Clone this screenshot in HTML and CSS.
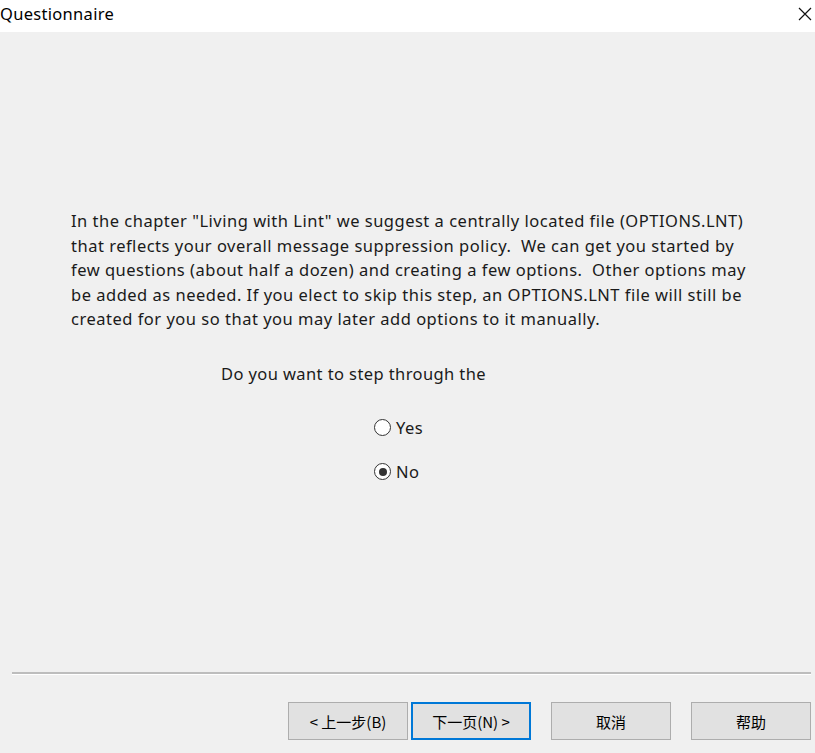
FILE: index.html
```html
<!DOCTYPE html>
<html>
<head>
<meta charset="utf-8">
<link rel="stylesheet" href="styles.css">
</head>
<body>
<div class="window">
  <div class="titlebar">
    <span class="title">Questionnaire</span>
    <svg class="close" width="16" height="16" viewBox="0 0 16 16"><path d="M2 2 L14 14 M14 2 L2 14" stroke="#111" stroke-width="1.2" fill="none"/></svg>
  </div>
  <div class="content">
    <p class="intro">In the chapter "Living with Lint" we suggest a centrally located file (OPTIONS.LNT)<br>that reflects your overall message suppression policy.&nbsp; We can get you started by<br>few questions (about half a dozen) and creating a few options.&nbsp; Other options may<br>be added as needed. If you elect to skip this step, an OPTIONS.LNT file will still be<br>created for you so that you may later add options to it manually.</p>
    <p class="question">Do you want to step through the</p>
    <div class="options">
      <label class="opt"><span class="radio"></span>Yes</label>
      <label class="opt"><span class="radio checked"></span>No</label>
    </div>
  </div>
  <div class="footer">
    <div class="sep"></div>
    <div class="buttons">
      <button class="btn">&lt; 上一步(B)</button>
      <button class="btn default">下一页(N) &gt;</button>
      <button class="btn gap">取消</button>
      <button class="btn gap">帮助</button>
    </div>
  </div>
</div>
</body>
</html>
```
FILE: styles.css
```css
html, body {
  margin: 0;
  padding: 0;
}
body {
  width: 815px;
  height: 753px;
  overflow: hidden;
  background: #f0f0f0;
  font-family: "Noto Sans", "Noto Sans CJK SC", sans-serif;
  color: #1a1a1a;
}
.window {
  display: flex;
  flex-direction: column;
  height: 753px;
}
.titlebar {
  height: 32px;
  background: #ffffff;
  display: flex;
  align-items: center;
  justify-content: space-between;
  padding: 0 2px 0 0;
}
.title {
  font-size: 16.5px;
  letter-spacing: 0.3px;
  color: #000;
  margin-top: -5px;
}
.close {
  margin-top: -4px;
}
.content {
  flex: 1;
  padding: 177px 0 0 71px;
}
.intro {
  margin: 0;
  white-space: nowrap;
  font-size: 16.5px;
  letter-spacing: 0.5px;
  line-height: 24.5px;
}
.question {
  margin: 30px 0 0 150px;
  font-size: 16.5px;
  letter-spacing: 0.4px;
  line-height: 24px;
}
.options {
  display: flex;
  flex-direction: column;
  gap: 20px;
  margin: 30px 0 0 303px;
}
.opt {
  display: flex;
  align-items: center;
  font-size: 16.5px;
  letter-spacing: 0.5px;
  line-height: 24px;
}
.radio {
  width: 17px;
  height: 17px;
  border: 1px solid #333;
  border-radius: 50%;
  background: #fff;
  margin-right: 5px;
  box-sizing: border-box;
  position: relative;
}
.radio.checked::after {
  content: "";
  position: absolute;
  left: 3.5px;
  top: 3.5px;
  width: 8px;
  height: 8px;
  border-radius: 50%;
  background: #333;
}
.footer {
  padding: 0 4px 13px 12px;
}
.sep {
  height: 2px;
  background: #bdbdbd;
  border-bottom: 1px solid #fff;
  margin-bottom: 27px;
}
.buttons {
  display: flex;
  justify-content: flex-end;
  gap: 3px;
}
.btn {
  width: 120px;
  height: 38px;
  background: #e1e1e1;
  border: 1px solid #adadad;
  font-family: "Noto Sans CJK SC", sans-serif;
  font-size: 15px;
  color: #000;
  padding: 0;
}
.btn.default {
  border: 2px solid #0078d7;
}
.btn.gap {
  margin-left: 17px;
}
```
